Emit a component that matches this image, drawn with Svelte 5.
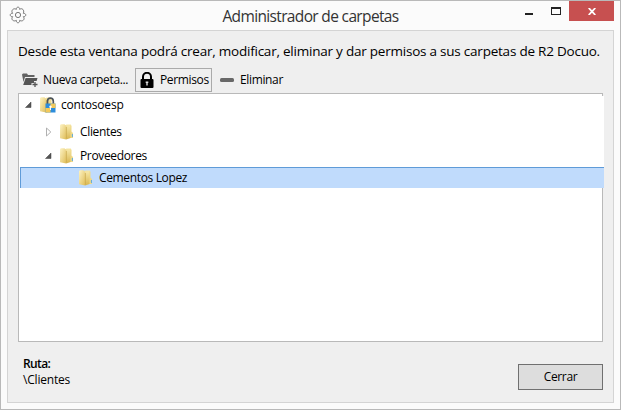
<script lang="ts">
	type TreeNode = {
		name: string;
		level: number;
		state: 'open' | 'closed' | 'leaf';
		locked?: boolean;
	};

	const nodes: TreeNode[] = [
		{ name: 'contosoesp', level: 0, state: 'open', locked: true },
		{ name: 'Clientes', level: 1, state: 'closed' },
		{ name: 'Proveedores', level: 1, state: 'open' },
		{ name: 'Cementos Lopez', level: 2, state: 'leaf' }
	];

	let selected = $state('Cementos Lopez');
	let path = $state('\\Clientes');
</script>

{#snippet folder(locked: boolean)}
	<svg class="folder" width="17" height="16" viewBox="0 0 17 16">
		<defs>
			<linearGradient id="front" x1="0" y1="0" x2="1" y2="1">
				<stop offset="0" stop-color="#fdf3c4" />
				<stop offset="1" stop-color="#dfbd58" />
			</linearGradient>
			<linearGradient id="back" x1="0" y1="0" x2="0" y2="1">
				<stop offset="0" stop-color="#f6e7a6" />
				<stop offset="1" stop-color="#d9b650" />
			</linearGradient>
		</defs>
		<path d="M6 1.5L7.5 .5H12V14H6Z" fill="url(#back)" />
		<path d="M1 1L2 .3H5.5L7.2 2V15.5L1 14.3Z" fill="url(#front)" />
		<path d="M7.2 3.2L8.4 1.8H11.6V14L7.2 15.5Z" fill="url(#back)" />
		<path d="M7.4 3V15" stroke="#c9a94e" stroke-width=".7" />
		<path d="M11.5 1.5H12.5V7.5L14 9V14H11.5Z" fill="#efd98a" />
		<path d="M13.4 10V13" stroke="#5da9dc" stroke-width="1" />
		{#if locked}
			<path d="M8.5 7V4.2a2.9 3 0 0 1 5.8 0V7" fill="none" stroke="#4d5459" stroke-width="1.7" />
			<path d="M6.5 6.5H16.5V15.5H6.5Z" fill="#2d8ddb" />
			<path d="M11.5 6.5H16.5V11H11.5ZM6.5 11H11.5V15.5H6.5Z" fill="#f3c95a" />
			<circle cx="11.5" cy="9.7" r="1.2" fill="#fff" />
			<path d="M11 10H12V13H11Z" fill="#fff" />
		{/if}
	</svg>
{/snippet}

<div class="window">
	<header class="titlebar">
		<svg class="gear" width="18" height="18" viewBox="0 0 18 18" fill="none" stroke="#777" stroke-width="1">
			<path d="M7.3 3.4C7.2 .4 10.8 .4 10.7 3.4C12.9 1.4 15.8 4.2 14.3 7.3C17.6 7.2 17.6 10.8 14.3 10.7C16.6 13.3 13.3 16.2 10.7 14.3C10.8 17.6 7.2 17.6 7.3 14.3C4.7 16.2 1.4 13.3 3.7 10.7C.4 10.8 .4 7.2 3.7 7.3C1.4 4.7 4.7 1.4 7.3 3.4Z" />
			<circle cx="9" cy="9" r="2.6" />
		</svg>
		<h1>Administrador de carpetas</h1>
		<div class="controls">
			<button class="minimize" aria-label="Minimizar"><span></span></button>
			<button class="maximize" aria-label="Maximizar"><span></span></button>
			<button class="close" aria-label="Cerrar ventana">
				<svg width="8" height="7" viewBox="0 0 8 7">
					<path d="M.7 0L7.3 7M7.3 0L.7 7" stroke="#fff" stroke-width="1.8" />
				</svg>
			</button>
		</div>
	</header>

	<main class="panel">
		<p class="intro">Desde esta ventana podrá crear, modificar, eliminar y dar permisos a sus carpetas de R2 Docuo.</p>

		<div class="toolbar">
			<button class="tool new">
				<svg width="17" height="16" viewBox="0 0 17 16">
					<path d="M0 2.5L1 1.5H5L6 3H12.5V5H3L1.5 10Z" fill="#626262" />
					<path d="M3.6 6H15.5L14.6 9H12V11H9.5V13H1.2Z" fill="#555" />
					<path d="M13 10V15M10.5 12.5H15.5" stroke="#555" stroke-width="1.3" />
				</svg>
				<span>Nueva carpeta...</span>
			</button>
			<button class="tool permissions">
				<svg width="14" height="16" viewBox="0 0 14 16">
					<path d="M3 8V4.7a4 3.9 0 0 1 8 0V8" fill="none" stroke="#000" stroke-width="2" />
					<rect x="0.5" y="7" width="13" height="9" rx="1" fill="#000" />
					<path d="M6.3 10H7.7V13.5H6.3ZM5.7 9.5H8.3V11H5.7Z" fill="#ddd" />
				</svg>
				<span>Permisos</span>
			</button>
			<button class="tool remove">
				<svg width="14" height="4" viewBox="0 0 14 4">
					<rect width="14" height="4" rx="1.5" fill="#686868" />
				</svg>
				<span>Eliminar</span>
			</button>
		</div>

		<div class="tree">
			<div class="rows">
				{#each nodes as node}
					<!-- svelte-ignore a11y_click_events_have_key_events, a11y_no_static_element_interactions -->
					<div class="row level-{node.level}" class:selected={selected === node.name} onclick={() => (selected = node.name)}>
						<svg class="arrow" width="8" height="10" viewBox="0 0 8 10">
							{#if node.state === 'open'}
								<path d="M7 2V7.5H1.5Z" fill="#555" stroke="#404040" stroke-width=".5" />
							{:else if node.state === 'closed'}
								<path d="M2.5 1L6.8 5L2.5 9Z" fill="#fff" stroke="#b0b0b0" />
							{/if}
						</svg>
						{@render folder(!!node.locked)}
						<span>{node.name}</span>
					</div>
				{/each}
			</div>
		</div>

		<footer>
			<div class="path">
				<strong>Ruta:</strong>
				<span>{path}</span>
			</div>
			<button class="dismiss">Cerrar</button>
		</footer>
	</main>
</div>

<style>
	:global(body) {
		margin: 0;
	}

	.window {
		box-sizing: border-box;
		width: 621px;
		height: 410px;
		display: flex;
		flex-direction: column;
		padding: 0 6px 6px;
		border: 1px solid #b9b9b9;
		background: #fbfbfb;
		color: #000;
		font: 12px/16px 'Open Sans', 'Noto Sans', sans-serif;
		letter-spacing: -0.35px;
		white-space: nowrap;
	}

	button {
		box-sizing: border-box;
		padding: 0;
		border: 0;
		background: none;
		color: inherit;
		font: inherit;
		letter-spacing: inherit;
	}

	svg {
		display: block;
		flex: none;
	}

	.titlebar {
		display: grid;
		grid-template-columns: 100px 1fr 100px;
		height: 29px;
	}

	.gear {
		margin: 5px 0 0 2px;
	}

	h1 {
		margin: 4px 0 0;
		color: #333;
		font-size: 15.5px;
		line-height: 22px;
		font-weight: 400;
		letter-spacing: -0.65px;
		text-align: center;
	}

	.controls {
		display: flex;
		justify-content: flex-end;
		height: 20px;
	}

	.controls button {
		display: flex;
		justify-content: center;
		width: 27px;
	}

	.minimize span {
		width: 8px;
		height: 2px;
		margin: 12px 0 0 1px;
		background: #222;
	}

	.maximize span {
		box-sizing: border-box;
		width: 10px;
		height: 8px;
		margin: 6px 0 0 1px;
		border: 1px solid #222;
		border-top-width: 2px;
	}

	.controls .close {
		width: 45px;
		align-items: center;
		padding-top: 1px;
		background: #c75050;
	}

	.panel {
		box-sizing: border-box;
		flex: 1;
		display: flex;
		flex-direction: column;
		padding: 9px 10px 12px;
		border: 1px solid #d4d4d4;
		background: #efefef;
	}

	.intro {
		margin: 0;
		font-size: 13.5px;
		line-height: 22px;
		letter-spacing: -0.225px;
	}

	.toolbar {
		display: flex;
		height: 24px;
		margin: 6px 0 1px;
	}

	.tool {
		display: flex;
		align-items: center;
	}

	.new {
		width: 117px;
		padding-left: 4px;
		gap: 4px;
	}

	.permissions {
		width: 77px;
		padding-left: 4px;
		gap: 6px;
		border: 1px solid #aaa;
	}

	.remove {
		padding-left: 8px;
		gap: 6px;
	}

	.tree {
		box-sizing: border-box;
		height: 249px;
		padding: 2px 0 0 1px;
		border: 1px solid #b9b9b9;
		background: #fff;
	}

	.rows {
		position: relative;
		width: 584px;
		background: #fff;
	}

	.row {
		box-sizing: border-box;
		display: flex;
		align-items: center;
		height: 24px;
		padding-left: 4px;
	}

	.level-0 {
		height: 18px;
		padding-left: 4px;
		margin-bottom: 5px;
	}

	.level-0 span {
		margin-left: 1px;
		letter-spacing: -0.2px;
	}

	.level-1 {
		padding: 2px 0 0 24px;
	}

	.level-2 {
		height: 21px;
		padding-left: 43px;
	}

	.selected {
		padding-left: 42px;
		border: 1px solid #5f9bd8;
		border-width: 1px 0 0 1px;
		background: #c0dbfc;
	}

	.folder {
		margin: 0 4px 0 7px;
	}

	footer {
		flex: 1;
		display: flex;
		justify-content: space-between;
		align-items: flex-end;
	}

	.path {
		display: flex;
		flex-direction: column;
		padding: 0 0 2px 5px;
		letter-spacing: -0.2px;
		line-height: 16px;
	}

	.path strong {
		font-weight: 600;
		letter-spacing: -0.6px;
	}

	.dismiss {
		width: 85px;
		height: 26px;
		border: 1px solid #707070;
		background: #ddd;
	}
</style>
